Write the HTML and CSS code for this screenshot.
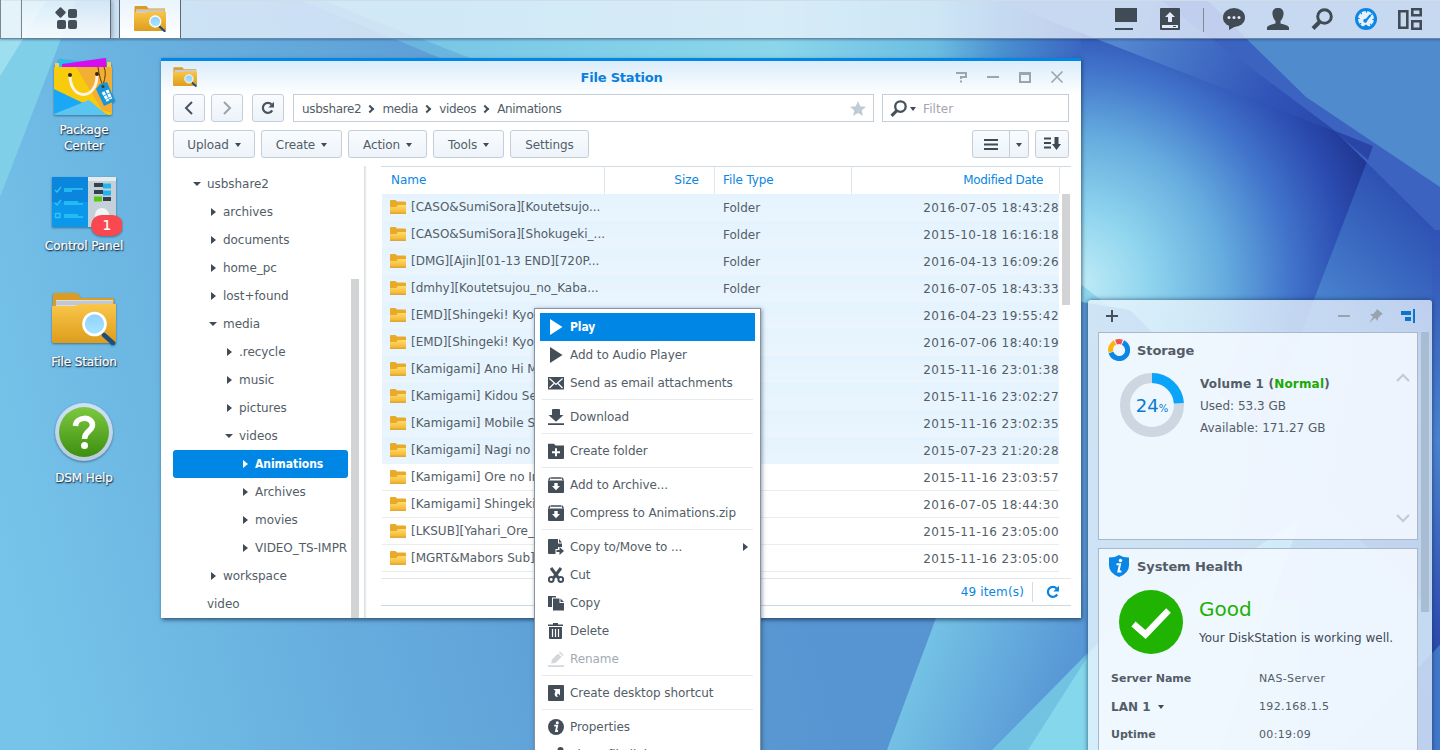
FILE: index.html
```html
<!DOCTYPE html>
<html lang="en">
<head>
<meta charset="utf-8">
<title>File Station</title>
<link rel="stylesheet" href="styles.css">
</head>
<body>
<svg width="0" height="0" class="defs">
  <defs>
    <linearGradient id="gold" x1="0" y1="0" x2="0" y2="1"><stop offset="0" stop-color="#f9c64a"/><stop offset="1" stop-color="#dd9d1d"/></linearGradient>
    <linearGradient id="glass" x1="0" y1="0" x2="0" y2="1"><stop offset="0" stop-color="#8fd0ff"/><stop offset="1" stop-color="#a8e6ff"/></linearGradient>
    <linearGradient id="yellow" x1="0" y1="0" x2="0" y2="1"><stop offset="0" stop-color="#ffdc6d"/><stop offset="1" stop-color="#f3b52e"/></linearGradient>
    <linearGradient id="green" x1="0" y1="0" x2="0" y2="1"><stop offset="0" stop-color="#7cc840"/><stop offset="1" stop-color="#3e8f10"/></linearGradient>
    <linearGradient id="ring" x1="0" y1="0" x2="0" y2="1"><stop offset="0" stop-color="#cfe2f5"/><stop offset="1" stop-color="#b9cadd"/></linearGradient>
  </defs>
  <symbol id="station" viewBox="0 0 64 52">
    <path d="M1 2a2 2 0 0 1 2-2h22l4 5h33v12H1z" fill="#dc9c22"/>
    <path d="M4 7h57v7H4z" fill="#d9dde2"/><path d="M4 9h57M4 11h57" stroke="#9aa0a8" stroke-width=".7"/>
    <path d="M0 14q0-1 1-1h22l5-2h35q1 0 1 1v36q0 2-2 2H2q-2 0-2-2z" fill="url(#gold)"/>
    <path d="M52 42l9 8" stroke="#1d4d80" stroke-width="4.6" stroke-linecap="round"/>
    <circle cx="42.500" cy="31" r="11" fill="url(#glass)" stroke="#fff" stroke-width="2.600"/>
  </symbol>
  <symbol id="folder" viewBox="0 0 16 14">
    <path d="M0 1q0-1 1-1h4.500l1.500 1.500h8q1 0 1 1V13H0z" fill="#e9aa2a"/>
    <path d="M0 7h6.500L8 5h8v8H0z" fill="url(#yellow)"/><path d="M0 13.300h16" stroke="#d89414"/>
  </symbol>
  <symbol id="refresh" viewBox="0 0 14 14">
    <path d="M11.200 9.400A5 5 0 1 1 10.600 3.500" fill="none" stroke="currentColor" stroke-width="2.200"/><path d="M13 .8V6.500H7.300z" fill="currentColor"/>
  </symbol>
  <symbol id="lens" viewBox="0 0 22 22">
    <circle cx="13.500" cy="8.500" r="6.800" fill="none" stroke="currentColor" stroke-width="3"/><path d="M8.500 14L2 20.500" stroke="currentColor" stroke-width="4"/>
  </symbol>
  <symbol id="archive" viewBox="0 0 16 16">
    <path d="M2.500 1h11" stroke="currentColor" stroke-width="1.500"/><path d="M1.800 .8L.8 3.500M14.200.8l1 2.700" stroke="currentColor" stroke-width="1.400"/>
    <path d="M0 3.500h16V15a1 1 0 0 1-1 1H1a1 1 0 0 1-1-1z" fill="currentColor"/><path d="M6.300 6h3.400v3H12l-4 4.300L4 9h2.300z" fill="#fff"/>
  </symbol>
</svg>

<div class="desktop">
  <svg class="wallpaper" width="1440" height="750" viewBox="0 0 1440 750" preserveAspectRatio="none">
    <defs>
      <linearGradient id="base" gradientUnits="userSpaceOnUse" x1="0" y1="560" x2="760" y2="380"><stop offset="0" stop-color="#76c4ea"/><stop offset=".35" stop-color="#68b0df"/><stop offset=".8" stop-color="#5b9ad4"/><stop offset="1" stop-color="#5795d2"/></linearGradient>
      <linearGradient id="topcyan" gradientUnits="userSpaceOnUse" x1="400" y1="0" x2="1085" y2="0"><stop offset="0" stop-color="#77c6e6"/><stop offset=".55" stop-color="#8bd6ea"/><stop offset=".78" stop-color="#6cbde2"/><stop offset=".88" stop-color="#4a8fd0"/><stop offset="1" stop-color="#3a64c0"/></linearGradient>
      <radialGradient id="glow" gradientUnits="userSpaceOnUse" cx="1075" cy="285" r="330"><stop offset="0" stop-color="#c3edf7"/><stop offset=".22" stop-color="#90d5ee"/><stop offset=".45" stop-color="#66addf"/><stop offset=".65" stop-color="#4275cb"/><stop offset=".82" stop-color="#2c4db2"/><stop offset="1" stop-color="#1c2f88"/></radialGradient>
      <linearGradient id="band" gradientUnits="userSpaceOnUse" x1="1120" y1="40" x2="1360" y2="150"><stop offset="0" stop-color="#5487d0"/><stop offset=".6" stop-color="#3054b8"/><stop offset="1" stop-color="#2742a5"/></linearGradient>
      <linearGradient id="fan" gradientUnits="userSpaceOnUse" x1="900" y1="650" x2="1050" y2="710"><stop offset="0" stop-color="#78c8e7"/><stop offset="1" stop-color="#5898d6"/></linearGradient>
      <linearGradient id="side" gradientUnits="userSpaceOnUse" x1="1330" y1="300" x2="1420" y2="200"><stop offset="0" stop-color="#4780cd"/><stop offset="1" stop-color="#2c4eb2"/></linearGradient>
      <linearGradient id="rim" x1="0" y1="0" x2="0" y2="1"><stop offset="0" stop-color="#2f52b6"/><stop offset=".5" stop-color="#4b83cf"/><stop offset="1" stop-color="#2c46ae"/></linearGradient>
    </defs>
    <rect width="1440" height="750" fill="url(#base)"/>
    <path d="M0 0H76L0 197z" fill="#80cfe9"/><path d="M0 0H47L0 76z" fill="#9edfef"/>
    <path d="M322 0H1440V400L1081 330z" fill="url(#topcyan)"/>
    <path d="M322 0L470 58H440L300 0z" fill="#6bb6df"/>
    <path d="M998 0H1240L1440 200V600H1140L1081 33z" fill="url(#band)"/>
    <path d="M1081 33L1373 146L1260 440H1076z" fill="url(#glow)"/>
    <path d="M1373 146L1440 230V750H1140z" fill="url(#side)"/>
    <path d="M1160 0H1208L1440 187V235L1334 130z" fill="#3c63c0"/>
    <path d="M1207 0H1440V187L1306 97z" fill="#508bcd"/>
    <path d="M1333 130L1373 146L1368 160z" fill="#2a45a8"/>
    <path d="M1078 282L1240 410L1300 750H1060z" fill="#8fd5eb"/>
    <path d="M1070 300L1130 310L1440 620V750H1070z" fill="#5b9cd6"/>
    <path d="M1432 230H1440V645L1432 654z" fill="url(#rim)"/><path d="M1440 645L1340 750H1440z" fill="#4077c9"/>
    <path d="M936 618L887 750H1120V560z" fill="url(#fan)"/>
    <path d="M1140 600L992 750H1300V600z" fill="#72c2e2"/><path d="M1092 650L1028 750H1220L1300 520z" fill="#85d8ec"/>
  </svg>

  <header class="taskbar">
    <div class="tb-edge"></div>
    <div class="tb-menu"><svg width="24" height="24" viewBox="0 0 24 24" fill="#444f5a"><rect x="2.500" y="2.500" width="8" height="8" rx="1" transform="rotate(45 6.500 6.500)"/><rect x="14" y="3" width="9" height="9" rx="2"/><rect x="3" y="14" width="9" height="9" rx="2"/><rect x="14" y="14" width="9" height="9" rx="2"/></svg></div>
    <div class="tb-app"><svg width="32" height="26"><use href="#station"/></svg></div>
    <div class="tray">
      <svg width="22" height="22" viewBox="0 0 22 22"><path d="M0 0h22v14H0zM0 20h18v2H0z" fill="#414b56"/></svg>
      <svg class="t-up" width="20" height="22" viewBox="0 0 20 22"><rect width="20" height="22" rx="1" fill="#414b56"/><path d="M10 4l5 5h-3v5H8V9H5z" fill="#e4e9f5"/><path d="M2 17h16v3H2z" fill="#e4e9f5"/><path d="M13 18.500h3" stroke="#414b56"/></svg>
      <span class="t-div"></span>
      <svg width="22" height="22" viewBox="0 0 22 22"><ellipse cx="11" cy="9.500" rx="11" ry="9.500" fill="#414b56"/><path d="M6 16l0 6 7-4z" fill="#414b56"/><g fill="#e4e9f5"><circle cx="6" cy="9.500" r="1.500"/><circle cx="11" cy="9.500" r="1.500"/><circle cx="16" cy="9.500" r="1.500"/></g></svg>
      <svg width="22" height="22" viewBox="0 0 22 22"><path d="M11 0c4 0 6 2.500 5.500 6.500C16 10 14.500 12 13.500 13v2.500c4 1 8 2 8.500 4V22H0v-2.500c.5-2 4.500-3 8.500-4V13C7.500 12 6 10 5.500 6.500 5 2.500 7 0 11 0z" fill="#414b56"/></svg>
      <svg width="22" height="22"><use href="#lens"/></svg>
      <svg width="22" height="22" viewBox="0 0 22 22"><circle cx="11" cy="11" r="11" fill="#0b86e5"/><circle cx="11" cy="11" r="8" fill="#e7f1fb"/><circle cx="11" cy="11" r="7.200" fill="none" stroke="#0b86e5" stroke-width="1.600" stroke-dasharray="1.200 4.400"/><path d="M15.500 7l-5 6" stroke="#0b86e5" stroke-width="2"/><circle cx="10.300" cy="12.800" r="2" fill="#0b86e5"/><path d="M7.500 19l3.500-2.500 3.500 2.500z" fill="#0b86e5"/></svg>
      <svg width="24" height="22" viewBox="0 0 24 22" fill="none" stroke="#414b56" stroke-width="2.600"><path d="M1.300 3.300h8v16.400h-8zM14.300 1.300h8.400v6h-8.400zM14.300 13.300h8.400v7.400h-8.400z"/></svg>
    </div>
  </header>

  <nav class="icons">
    <div class="app"><svg width="64" height="64" viewBox="0 0 64 64">
      <path d="M7 3l30 4-2 10H6z" fill="#1fc1ee"/><path d="M10 8l44-6v14H10z" fill="#d60df0"/><path d="M3 7h4v8H3zM55 6h4v9h-4z" fill="#f3cf5c"/>
      <path d="M3 11h56q1 0 1 1v45q0 2-2 2H4q-2 0-2-2V12q0-1 1-1z" fill="#f8cb0d"/><path d="M24 11h36v46L50 54z" fill="#f2af34"/><path d="M2 33l54 26H4q-2 0-2-2z" fill="#1aa7f5"/><path d="M2 58l35-14 18 15H4z" fill="#5bc5f2"/>
      <path d="M18 19C18 45 45 45 45 19" fill="none" stroke="#fff4e5" stroke-width="3"/><circle cx="18" cy="19" r="2" fill="#3a2505"/><circle cx="45" cy="18" r="2" fill="#3a2505"/>
      <path d="M46 11q2 14 5 18 4-12 1-18" fill="none" stroke="#5b3b12"/><path d="M44 33l4-5 7-2 8 19-11 5z" fill="#1497dc"/><circle cx="51" cy="30.500" r="1.500" fill="#503610"/><path d="M51 36l5 9M55 34l4 9" stroke="#fff" stroke-width="3" stroke-dasharray="3.500 .7"/>
    </svg><span>Package<br>Center</span></div>
    <div class="app a2"><svg width="76" height="64" viewBox="0 0 76 64">
      <path d="M6 3h36v50H7q-1 0-1-1z" fill="#0a86dc"/><path d="M6 28h36v25H6z" fill="#0a97ec"/><path d="M42 3h28v50H42z" fill="#c6d0d8"/><path d="M42 3h28v4H42z" fill="#e7ebee"/>
      <g stroke="#2ec8f5" stroke-width="1.300" fill="none"><path d="M9 16l2 2 4-5M9 29l2 2 4-5M9.500 39.500h4.500v4H9.500zM18 15h19M18 17h8M18 28h14M18 30h19M18 41h14M18 43h19"/></g>
      <path d="M48 11h9M48 18h9M57 25h8" stroke="#34404c" stroke-width="4"/><path d="M57 12h8M57 19h8" stroke="#1fb6f0" stroke-width="5"/><path d="M48 25h8" stroke="#57c811" stroke-width="5"/><circle cx="56" cy="41" r="7" fill="#f1f4f6"/>
      <rect x="45" y="41" width="32" height="21" rx="10.500" fill="#f94850"/>
    </svg><b class="badge">1</b><span>Control Panel</span></div>
    <div class="app a3"><svg width="64" height="52"><use href="#station"/></svg><span>File Station</span></div>
    <div class="app a4"><svg width="60" height="60" viewBox="0 0 60 60"><circle cx="30" cy="30" r="29" fill="url(#ring)"/><circle cx="30" cy="30" r="25" fill="url(#green)"/><path d="M21.500 24C22 14 38.500 14 38.500 23c0 6-8 6-8 14" fill="none" stroke="#fff" stroke-width="5.500"/><circle cx="30.500" cy="43.500" r="3.500" fill="#fff"/></svg><span>DSM Help</span></div>
  </nav>

  <section class="window">
    <div class="titlebar"><svg width="24" height="20"><use href="#station"/></svg><h1>File Station</h1>
      <svg class="ctl" width="110" height="14" viewBox="0 0 110 14" fill="none" stroke="#9aa5ae" stroke-width="2"><path d="M1 3h10v4H6v2M6 10.500v2M32 7h12"/><path d="M65 3h10v9H65z"/><path d="M64 4h12"/><path d="M96.500 1.500l11 11M107.500 1.500l-11 11" stroke-width="1.600"/></svg>
    </div>
    <div class="navrow">
      <button class="sq"><svg width="10" height="14" viewBox="0 0 10 14"><path d="M8 1L2 7l6 6" fill="none" stroke="#4a545e" stroke-width="2"/></svg></button>
      <button class="sq s2"><svg width="10" height="14" viewBox="0 0 10 14"><path d="M2 1l6 6-6 6" fill="none" stroke="#9aa4ad" stroke-width="2"/></svg></button>
      <button class="sq s3"><svg width="14" height="14"><use href="#refresh"/></svg></button>
      <div class="path"><span>usbshare2</span><i></i><span>media</span><i></i><span>videos</span><i></i><span>Animations</span><svg width="16" height="15" viewBox="0 0 16 15"><path d="M8 0l2.200 5.200 5.800.5-4.300 3.700L13 15 8 12l-5 3 1.300-5.600L0 5.700l5.800-.5z" fill="#c1cbd5"/></svg></div>
      <div class="filter"><svg width="17" height="17"><use href="#lens"/></svg><em class="dn"></em><span>Filter</span></div>
    </div>
    <div class="tools">
      <button class="w82">Upload<em class="dn"></em></button><button class="w81">Create<em class="dn"></em></button><button class="w79">Action<em class="dn"></em></button><button class="w71">Tools<em class="dn"></em></button><button class="w79">Settings</button>
      <div class="split"><div><svg width="14" height="11" viewBox="0 0 14 11"><path d="M0 1h14M0 5.500h14M0 10h14" stroke="#3f4954" stroke-width="2"/></svg></div><div class="arrow"><em class="dn"></em></div></div>
      <button class="sort"><svg width="17" height="14" viewBox="0 0 17 14"><path d="M0 1.500h7M0 6h7M0 10.500h7" stroke="#3f4954" stroke-width="2"/><path d="M10.500 0h4v7H17l-4.500 6L8 7h2.500z" fill="#3f4954"/></svg></button>
    </div>
    <div class="body">
      <div class="tree">
        <div class="node l0"><em class="dn big"></em>usbshare2</div>
        <div class="node l1"><em class="rt"></em>archives</div>
        <div class="node l1"><em class="rt"></em>documents</div>
        <div class="node l1"><em class="rt"></em>home_pc</div>
        <div class="node l1"><em class="rt"></em>lost+found</div>
        <div class="node l1"><em class="dn big"></em>media</div>
        <div class="node l2"><em class="rt"></em>.recycle</div>
        <div class="node l2"><em class="rt"></em>music</div>
        <div class="node l2"><em class="rt"></em>pictures</div>
        <div class="node l2"><em class="dn big"></em>videos</div>
        <div class="node l3 on"><em class="rt"></em>Animations</div>
        <div class="node l3"><em class="rt"></em>Archives</div>
        <div class="node l3"><em class="rt"></em>movies</div>
        <div class="node l3"><em class="rt"></em>VIDEO_TS-IMPR</div>
        <div class="node l1"><em class="rt"></em>workspace</div>
        <div class="node l0 leaf">video</div>
      </div>
      <div class="treebar"><div></div></div>
      <div class="split-line"></div>
      <div class="list">
        <div class="thead"><div class="c1">Name</div><div class="c2">Size</div><div class="c3">File Type</div><div class="c4">Modified Date</div></div>
        <div class="rows">
          <div class="row sel"><svg><use href="#folder"/></svg><span class="c1">[CASO&amp;SumiSora][Koutetsujo...</span><span class="ft">Folder</span><time>2016-07-05 18:43:28</time></div>
          <div class="row sel"><svg><use href="#folder"/></svg><span class="c1">[CASO&amp;SumiSora][Shokugeki_...</span><span class="ft">Folder</span><time>2015-10-18 16:16:18</time></div>
          <div class="row sel"><svg><use href="#folder"/></svg><span class="c1">[DMG][Ajin][01-13 END][720P...</span><span class="ft">Folder</span><time>2016-04-13 16:09:26</time></div>
          <div class="row sel"><svg><use href="#folder"/></svg><span class="c1">[dmhy][Koutetsujou_no_Kaba...</span><span class="ft">Folder</span><time>2016-07-05 18:43:33</time></div>
          <div class="row sel"><svg><use href="#folder"/></svg><span class="c1">[EMD][Shingeki! Kyo</span><span class="ft"></span><time>2016-04-23 19:55:42</time></div>
          <div class="row sel"><svg><use href="#folder"/></svg><span class="c1">[EMD][Shingeki! Kyo</span><span class="ft"></span><time>2016-07-06 18:40:19</time></div>
          <div class="row sel"><svg><use href="#folder"/></svg><span class="c1">[Kamigami] Ano Hi Mita</span><span class="ft"></span><time>2015-11-16 23:01:38</time></div>
          <div class="row sel"><svg><use href="#folder"/></svg><span class="c1">[Kamigami] Kidou Senshi</span><span class="ft"></span><time>2015-11-16 23:02:27</time></div>
          <div class="row sel"><svg><use href="#folder"/></svg><span class="c1">[Kamigami] Mobile Suit</span><span class="ft"></span><time>2015-11-16 23:02:35</time></div>
          <div class="row sel"><svg><use href="#folder"/></svg><span class="c1">[Kamigami] Nagi no Asu</span><span class="ft"></span><time>2015-07-23 21:20:28</time></div>
          <div class="row"><svg><use href="#folder"/></svg><span class="c1">[Kamigami] Ore no Imo</span><span class="ft"></span><time>2015-11-16 23:03:57</time></div>
          <div class="row"><svg><use href="#folder"/></svg><span class="c1">[Kamigami] Shingeki no</span><span class="ft"></span><time>2016-07-05 18:44:30</time></div>
          <div class="row"><svg><use href="#folder"/></svg><span class="c1">[LKSUB][Yahari_Ore_</span><span class="ft"></span><time>2015-11-16 23:05:00</time></div>
          <div class="row"><svg><use href="#folder"/></svg><span class="c1">[MGRT&amp;Mabors Sub]</span><span class="ft"></span><time>2015-11-16 23:05:00</time></div>
          <div class="scroll"></div>
        </div>
        <div class="foot"><span>49 item(s)</span><svg width="14" height="14"><use href="#refresh"/></svg></div>
      </div>
    </div>
  </section>

  <aside class="widgets">
    <div class="whead"><svg width="12" height="12" viewBox="0 0 12 12"><path d="M6 0v12M0 6h12" stroke="#46505a" stroke-width="2"/></svg>
      <svg class="wctl" width="78" height="16" viewBox="0 0 78 16"><path d="M0 8h12" stroke="#9aa4ae" stroke-width="2"/><path d="M39 1l6 5-2 1-3 3v3l-3-3-6 5 4-6-3-3h3l3-3z" fill="#98a3ad"/><path d="M63 3h10v4H63zM67 9h6v4h-6zM75 1h2v14h-2z" fill="#0a76c9"/></svg></div>
    <div class="wbody"><div class="cards">
      <div class="card storage">
        <h2><svg width="22" height="22" viewBox="0 0 22 22" fill="none" stroke-width="5"><path d="M3 13.500A8.500 8.500 0 1 0 15 3.500" stroke="#0b86e5"/><path d="M2.900 13A8.500 8.500 0 0 1 7 3.400" stroke="#fbb40b"/><path d="M8 3.100a8.500 8.500 0 0 1 6 0" stroke="#f84b50"/></svg><span>Storage</span></h2>
        <div class="vol"><div class="donut"><svg width="64" height="64" viewBox="0 0 64 64" fill="none" stroke-width="10"><circle cx="32" cy="32" r="27" stroke="#cdd7e1"/><path d="M32 5A27 27 0 0 1 58.900 30.300" stroke="#0aa4fb"/></svg><span>24<small>%</small></span></div>
          <div class="vtext"><b>Volume 1 (<i>Normal</i>)</b><span>Used: 53.3 GB</span><span>Available: 171.27 GB</span></div>
          <svg class="chev" width="14" height="150" viewBox="0 0 14 150" fill="none" stroke="#c1c9d2" stroke-width="2"><path d="M1 8l6-6 6 6M1 142l6 6 6-6"/></svg></div>
      </div>
      <div class="card health">
        <h2><svg width="22" height="22" viewBox="0 0 22 22"><path d="M11 0Q15 2.500 21 2.500v8Q21 18 11 22 1 18 1 10.500v-8Q7 2.500 11 0z" fill="#0b86e5"/><circle cx="12.500" cy="5.500" r="1.700" fill="#fff"/><path d="M8.500 9.300h3.500l-1.600 7.200h3" fill="none" stroke="#fff" stroke-width="2"/></svg><span>System Health</span></h2>
        <div class="state"><svg width="64" height="64" viewBox="0 0 64 64"><circle cx="32" cy="32" r="32" fill="#20b302"/><path d="M14.500 34l12 10.500L49.500 20.500" fill="none" stroke="#fff" stroke-width="6.500"/></svg><div><strong>Good</strong><span>Your DiskStation is working well.</span></div></div>
        <dl><dt>Server Name</dt><dd>NAS-Server</dd><dt class="lan">LAN 1 <em class="dn"></em></dt><dd>192.168.1.5</dd><dt>Uptime</dt><dd>00:19:09</dd></dl>
      </div>
    </div><div class="wbar"></div></div>
  </aside>

  <div class="menu">
    <div class="mi act"><svg viewBox="0 0 16 16"><path d="M2 0l12.500 8L2 16z" fill="currentColor"/></svg>Play</div>
    <div class="mi"><svg viewBox="0 0 16 16"><path d="M2 0l12.500 8L2 16z" fill="currentColor"/></svg>Add to Audio Player</div>
    <div class="mi"><svg viewBox="0 0 16 16"><path d="M0 2h16v12.500H0z" fill="currentColor"/><path d="M1.500 3.500L8 9.500l6.500-6M1.500 13L6 8.500M14.500 13L10 8.500" fill="none" stroke="#fff" stroke-width="1.200"/></svg>Send as email attachments</div>
    <hr>
    <div class="mi"><svg viewBox="0 0 16 16"><path d="M4 1q0-1 1-1h6q1 0 1 1v5h3.500L8 12.800.5 6H4zM0 14.200h16V16H0z" fill="currentColor"/></svg>Download</div>
    <hr>
    <div class="mi"><svg viewBox="0 0 16 16"><path d="M0 .7h6L7.500 2.500H16V15a1 1 0 0 1-1 1H1a1 1 0 0 1-1-1z" fill="currentColor"/><path d="M8 5.200v8M4 9.200h8" stroke="#fff" stroke-width="2"/></svg>Create folder</div>
    <hr>
    <div class="mi"><svg viewBox="0 0 16 16"><use href="#archive"/></svg>Add to Archive...</div>
    <div class="mi"><svg viewBox="0 0 16 16"><use href="#archive"/></svg>Compress to Animations.zip</div>
    <hr>
    <div class="mi"><svg viewBox="0 0 16 16"><path d="M1 0h9v4.500h4V8h-4v2H7.500v5H1q-1 0-1-1V1q0-1 1-1z" fill="currentColor"/><path d="M11 0l3 3.500h-3zM8.500 11h3V8l4.500 4-4.500 4v-3h-3z" fill="currentColor"/></svg>Copy to/Move to ...<em class="rt"></em></div>
    <div class="mi"><svg viewBox="0 0 16 16" fill="none" stroke="currentColor"><path d="M3 1l7.500 10M13 1L5.500 11" stroke-width="3"/><circle cx="3.200" cy="12.500" r="2.400" stroke-width="2"/><circle cx="12.800" cy="12.500" r="2.400" stroke-width="2"/></svg>Cut</div>
    <div class="mi"><svg viewBox="0 0 16 16"><path d="M0 1h8v1.500H4V12H0zM5 3.500h6.500V8H16v7.500H5zM12.500 3.500L16 7h-3.500z" fill="currentColor"/></svg>Copy</div>
    <div class="mi"><svg viewBox="0 0 16 16"><path d="M0 1.500h5V0h5v1.500h5V3H0zM1 4h13v11q0 1-1 1H2q-1 0-1-1z" fill="currentColor"/><path d="M4.500 6v8M7.500 6v8M10.500 6v8" stroke="#fff" stroke-width="1.200"/></svg>Delete</div>
    <div class="mi off"><svg viewBox="0 0 16 16"><path d="M3 12.500l1-4L10 2.500 13.500 6l-6 6zM11 1.500l1-1 3.500 3.500-1 1zM0 14.200h16V16H0z" fill="#d3d7da"/></svg>Rename</div>
    <hr>
    <div class="mi"><svg viewBox="0 0 16 16"><path d="M1 0h14a1 1 0 0 1 1 1v14a1 1 0 0 1-1 1H1a1 1 0 0 1-1-1V1a1 1 0 0 1 1-1z" fill="currentColor"/><path d="M5.500 4H12v6.500L10 8.500q-2 1.700.2 3.500Q5 12 7.500 6z" fill="#fff"/></svg>Create desktop shortcut</div>
    <hr>
    <div class="mi"><svg viewBox="0 0 16 16"><circle cx="8" cy="8" r="8" fill="currentColor"/><circle cx="9.300" cy="3.800" r="1.500" fill="#fff"/><path d="M6.200 6.700h3L8 12h2" fill="none" stroke="#fff" stroke-width="1.800"/></svg>Properties</div>
    <div class="mi"><svg viewBox="0 0 16 16"><circle cx="12.500" cy="3" r="3" fill="currentColor"/><circle cx="3" cy="8" r="3" fill="currentColor"/></svg>Share file links</div>
  </div>
</div>
</body>
</html>
```

FILE: styles.css
```css
* { box-sizing: border-box; }
body { margin: 0; font: 12px/16px Verdana, "DejaVu Sans", sans-serif; color: #535d67; }
.defs { position: absolute; }
svg { display: block; flex: none; }
h1, h2, dl, dd { margin: 0; }
.desktop { position: relative; width: 1440px; height: 750px; overflow: hidden; background: #5b9ad4; }
.wallpaper { position: absolute; inset: 0; }

/* carets */
.dn { width: 0; height: 0; border: 3.5px solid transparent; border-top: 4px solid #414b56; border-bottom: 0; flex: none; }
.dn.big { border-left-width: 4px; border-right-width: 4px; }
.rt { width: 0; height: 0; border: 4px solid transparent; border-left: 5px solid #414b56; border-right: 0; flex: none; }

/* taskbar */
.taskbar { position: relative; display: flex; height: 39px; background: rgba(240, 244, 252, .74); border-bottom: 1px solid #6a86a3; box-shadow: 0 1px 2px rgba(10, 40, 80, .35), inset 0 1px 0 #cfdde9; }
.tb-edge { width: 22px; border-left: 1px solid #7b8894; border-right: 1px solid #7b8894; background: rgba(255, 255, 255, .25); }
.tb-menu { width: 89px; border-right: 1px solid #5d6a76; background: linear-gradient(rgba(255,255,255,.1), rgba(255,255,255,.75)); padding: 6px 0 0 32px; box-shadow: 2px 0 4px rgba(60,80,100,.35); }
.tb-app { margin-left: 8px; width: 62px; border: solid #5d6a76; border-width: 0 1px; background: linear-gradient(#e9f4fc, #fff); padding: 6px 0 0 14px; }
.tray { margin-left: auto; display: flex; gap: 22px; padding: 8px 18px 0 0; color: #414b56; }
.tray svg:last-child { margin: 0 0 0 -1px; }
.t-up { margin-left: 1px; }
.t-div { width: 1px; height: 24px; margin: 0 -3px 0 1px; background: #7d8a98; }

/* desktop shortcuts */
.icons { position: absolute; left: 34px; top: 56px; width: 100px; display: flex; flex-direction: column; }
.app { position: relative; display: flex; flex-direction: column; align-items: center; height: 118px; color: #fff; text-align: center; font-size: 12px; text-shadow: 1px 1px 1px #1d3c58, 0 1px 2px #1d3c58; -webkit-text-stroke: .2px #fff; white-space: nowrap; }
.app svg { filter: drop-shadow(0 1px 1px rgba(10, 40, 70, .5)); }
.app span { margin-top: 2px; letter-spacing: -.1px; }
.a2 span { margin-top: 0; }
.a3 span { margin-top: 9px; }
.a4 span { margin-top: 8px; }
.a3 { padding-top: 1px; height: 110px; }
.badge { position: absolute; left: 57px; top: 42px; width: 32px; font: 14px/18px "DejaVu Sans"; text-shadow: none; }

/* window */
.window { position: absolute; left: 161px; top: 58px; width: 920px; height: 560px; padding: 0 12px; display: flex; flex-direction: column; border-top: 3px solid #0086e5; background: linear-gradient(#daecfb, #fff 34px); box-shadow: 1px 2px 4px rgba(15, 40, 70, .65); }
.titlebar { position: relative; display: flex; justify-content: space-between; height: 33px; padding: 6px 4px 0 0; }
.titlebar h1 { position: absolute; left: 0; right: 0; top: 7px; text-align: center; font: bold 13px/20px "DejaVu Sans", sans-serif; color: #0a7fdc; letter-spacing: -.2px; text-indent: 1px; }
.ctl { margin: 3px 0 0; }
button { font: inherit; color: inherit; letter-spacing: -.1px; padding: 1px 0 0; display: flex; align-items: center; justify-content: center; gap: 6px; height: 28px; border: 1px solid #c3ced8; border-radius: 3px; background: linear-gradient(#f9fcfe, #edf3fa); }
.navrow { display: flex; height: 28px; margin-bottom: 8px; }
.sq { width: 32px; color: #4a545e; padding: 0; }
.s2 { margin-left: 6px; }
.s3 { margin: 0 9px; }
.path, .filter { display: flex; align-items: center; height: 28px; padding-top: 2px; border: 1px solid #c3ced8; background: #fff; }
.path { width: 581px; padding: 2px 7px 0 8px; letter-spacing: -.33px; }
.path svg { margin: -1px 0 0 auto; }
.path i { width: 6px; height: 6px; border: solid #46505a; border-width: 2px 2px 0 0; transform: rotate(45deg); margin: 0 9px 0 6px; }
.filter { margin-left: 8px; width: 187px; padding-left: 7px; color: #9fa6ad; }
.filter svg { color: #46505a; margin-top: -1px; }
.filter span { margin-left: 7px; letter-spacing: .1px; }
.filter .dn { margin-left: 3px; }
.tools { display: flex; gap: 6px; margin-bottom: 8px; }
.w82 { width: 82px; } .w81 { width: 81px; } .w79 { width: 79px; } .w71 { width: 71px; }
.split { margin-left: auto; width: 57px; display: flex; border: 1px solid #c3ced8; border-radius: 3px; background: linear-gradient(#f9fcfe, #edf3fa); }
.split div { flex: 1; display: grid; place-items: center; }
.split .arrow { flex: 0 0 19px; border-left: 1px solid #c3ced8; padding-top: 2px; }
.sort { width: 34px; padding: 0; }
.body { flex: 1; display: flex; min-height: 0; }
.tree { flex: none; width: 175px; padding-top: 4px; overflow: hidden; }
.node { display: flex; align-items: center; height: 28px; border-radius: 3px; white-space: nowrap; letter-spacing: -.05px; }
.node .big { margin: 0 6px 0 0; }
.node .rt { margin-right: 7px; margin-left: 2px; }
.l0 { padding-left: 20px; } .l1 { padding-left: 36px; } .l2 { padding-left: 52px; } .l3 { padding-left: 68px; }
.leaf { padding-left: 34px; }
.on { background: #0086e5; color: #fff; font-weight: bold; font-family: "DejaVu Sans Condensed", "DejaVu Sans", sans-serif; font-stretch: condensed; }
.on .rt { border-left-color: #fff; }
.treebar { flex: none; width: 11px; padding: 113px 0 0 3px; overflow: hidden; }
.treebar div { width: 8px; height: 339px; background: #d1d3d5; }
.split-line { flex: none; width: 3px; margin: 0 14px 0 5px; background: linear-gradient(90deg, #d5d9dc, #fff); }
.list { width: 690px; flex: none; }
.thead { display: flex; height: 28px; border-top: 1px solid #d0dbe4; color: #0a86e2; line-height: 26px; }
.thead div { border-right: 1px solid #dfe6ec; }
.thead .c1 { width: 224px; padding-left: 10px; }
.c2 { width: 110px; padding-right: 15px; text-align: right; }
.c3 { width: 137px; padding-left: 8px; letter-spacing: -.1px; }
.c4 { width: 208px; padding-right: 16px; text-align: right; letter-spacing: -.3px; }
.rows { position: relative; height: 385px; border-bottom: 1px solid #e2e7ec; }
.row { display: flex; width: 677px; margin-left: 1px; height: 27px; padding-left: 9px; border-bottom: 1px solid #e9edf0; white-space: nowrap; line-height: 26px; }
.sel { background: linear-gradient(#e4f3fe, #eaf5fe); border-color: #e9f4fc; }
.row svg { width: 16px; height: 14px; margin: 6px 5px 0 -1px; }
.row .c1 { width: 312px; overflow: hidden; }
.ft { line-height: 28px; }
.row time { margin-left: auto; line-height: 28px; letter-spacing: .44px; }
.scroll { position: absolute; right: 1px; top: 0; width: 8px; height: 111px; background: #d1d3d5; }
.foot { display: flex; height: 27px; border-bottom: 1px solid #ccd8e2; color: #0a86e2; justify-content: flex-end; align-items: center; padding-right: 11px; }
.foot span { border-right: 1px solid #d3dde5; padding-right: 8px; margin-right: 13px; line-height: 20px; letter-spacing: .15px; }

/* widgets panel */
.widgets { position: absolute; left: 1088px; top: 300px; width: 344px; height: 470px; padding: 0 3px 0 10px; border-radius: 3px 3px 0 0; background: linear-gradient(100deg, rgba(232,245,253,.82), rgba(228,236,250,.76)); box-shadow: 0 0 5px rgba(20, 50, 90, .75); }
.whead { display: flex; justify-content: space-between; align-items: center; height: 32px; padding: 0 13px 0 8px; }
.wbody { display: flex; gap: 3px; }
.cards { width: 320px; display: flex; flex-direction: column; gap: 8px; }
.card { height: 208px; border: 1px solid #aab9ca; background: rgba(242, 248, 255, .88); padding: 6px 9px; }
.wbar { width: 8px; height: 280px; background: #a9bdd2; }
.card h2 { display: flex; gap: 7px; align-items: center; height: 22px; font: bold 13px/22px "DejaVu Sans", sans-serif; }
.card h2 span { padding-top: 2px; letter-spacing: -.1px; }
.vol { display: flex; padding: 12px 0 0 12px; }
.donut { position: relative; }
.donut span { position: absolute; inset: 0; text-align: center; font-size: 18px; line-height: 65px; color: #0a7bd0; }
.donut small { font-size: 10px; }
.vtext { margin-left: 16px; display: flex; flex-direction: column; line-height: 22px; }
.vtext b { letter-spacing: .18px; }
.vtext i { font-style: normal; color: #1ca900; }
.chev { margin-left: auto; margin-right: -2px; }
.health { height: 230px; }
.state { display: flex; padding: 13px 0 0 11px; gap: 16px; white-space: nowrap; }
.state strong { display: block; font: 20px/24px "DejaVu Sans", sans-serif; color: #1faf03; margin: 7px 0 9px; }
.state div { color: #414b56; }
dl { display: grid; grid-template-columns: 148px 1fr; grid-auto-rows: 28px; line-height: 28px; font-size: 11px; padding: 11px 0 0 3px; }
dt { font-weight: bold; }
dd { letter-spacing: .35px; }
.lan { display: flex; align-items: center; gap: 7px; font-size: 12px; }

/* context menu */
.menu { position: absolute; left: 534px; top: 308px; width: 227px; height: 480px; padding: 4px 5px; border: 1px solid #87949f; background: #fff; box-shadow: 1px 1px 4px rgba(20, 50, 80, .5); }
.mi { display: flex; align-items: center; gap: 6px; height: 28px; padding-left: 8px; white-space: nowrap; letter-spacing: -.07px; }
.mi svg { width: 16px; height: 16px; color: #444e59; }
.mi .rt { margin: 0 7px 0 auto; }
.mi.act { background: #0086e5; color: #fff; font-weight: bold; font-family: "DejaVu Sans Condensed", "DejaVu Sans", sans-serif; font-stretch: condensed; }
.mi.act svg { color: #fff; }
.mi.off { color: #a3abb2; }
hr { margin: 2px 2px 3px; height: 1px; border: 0; background: #e6eaed; }
```
